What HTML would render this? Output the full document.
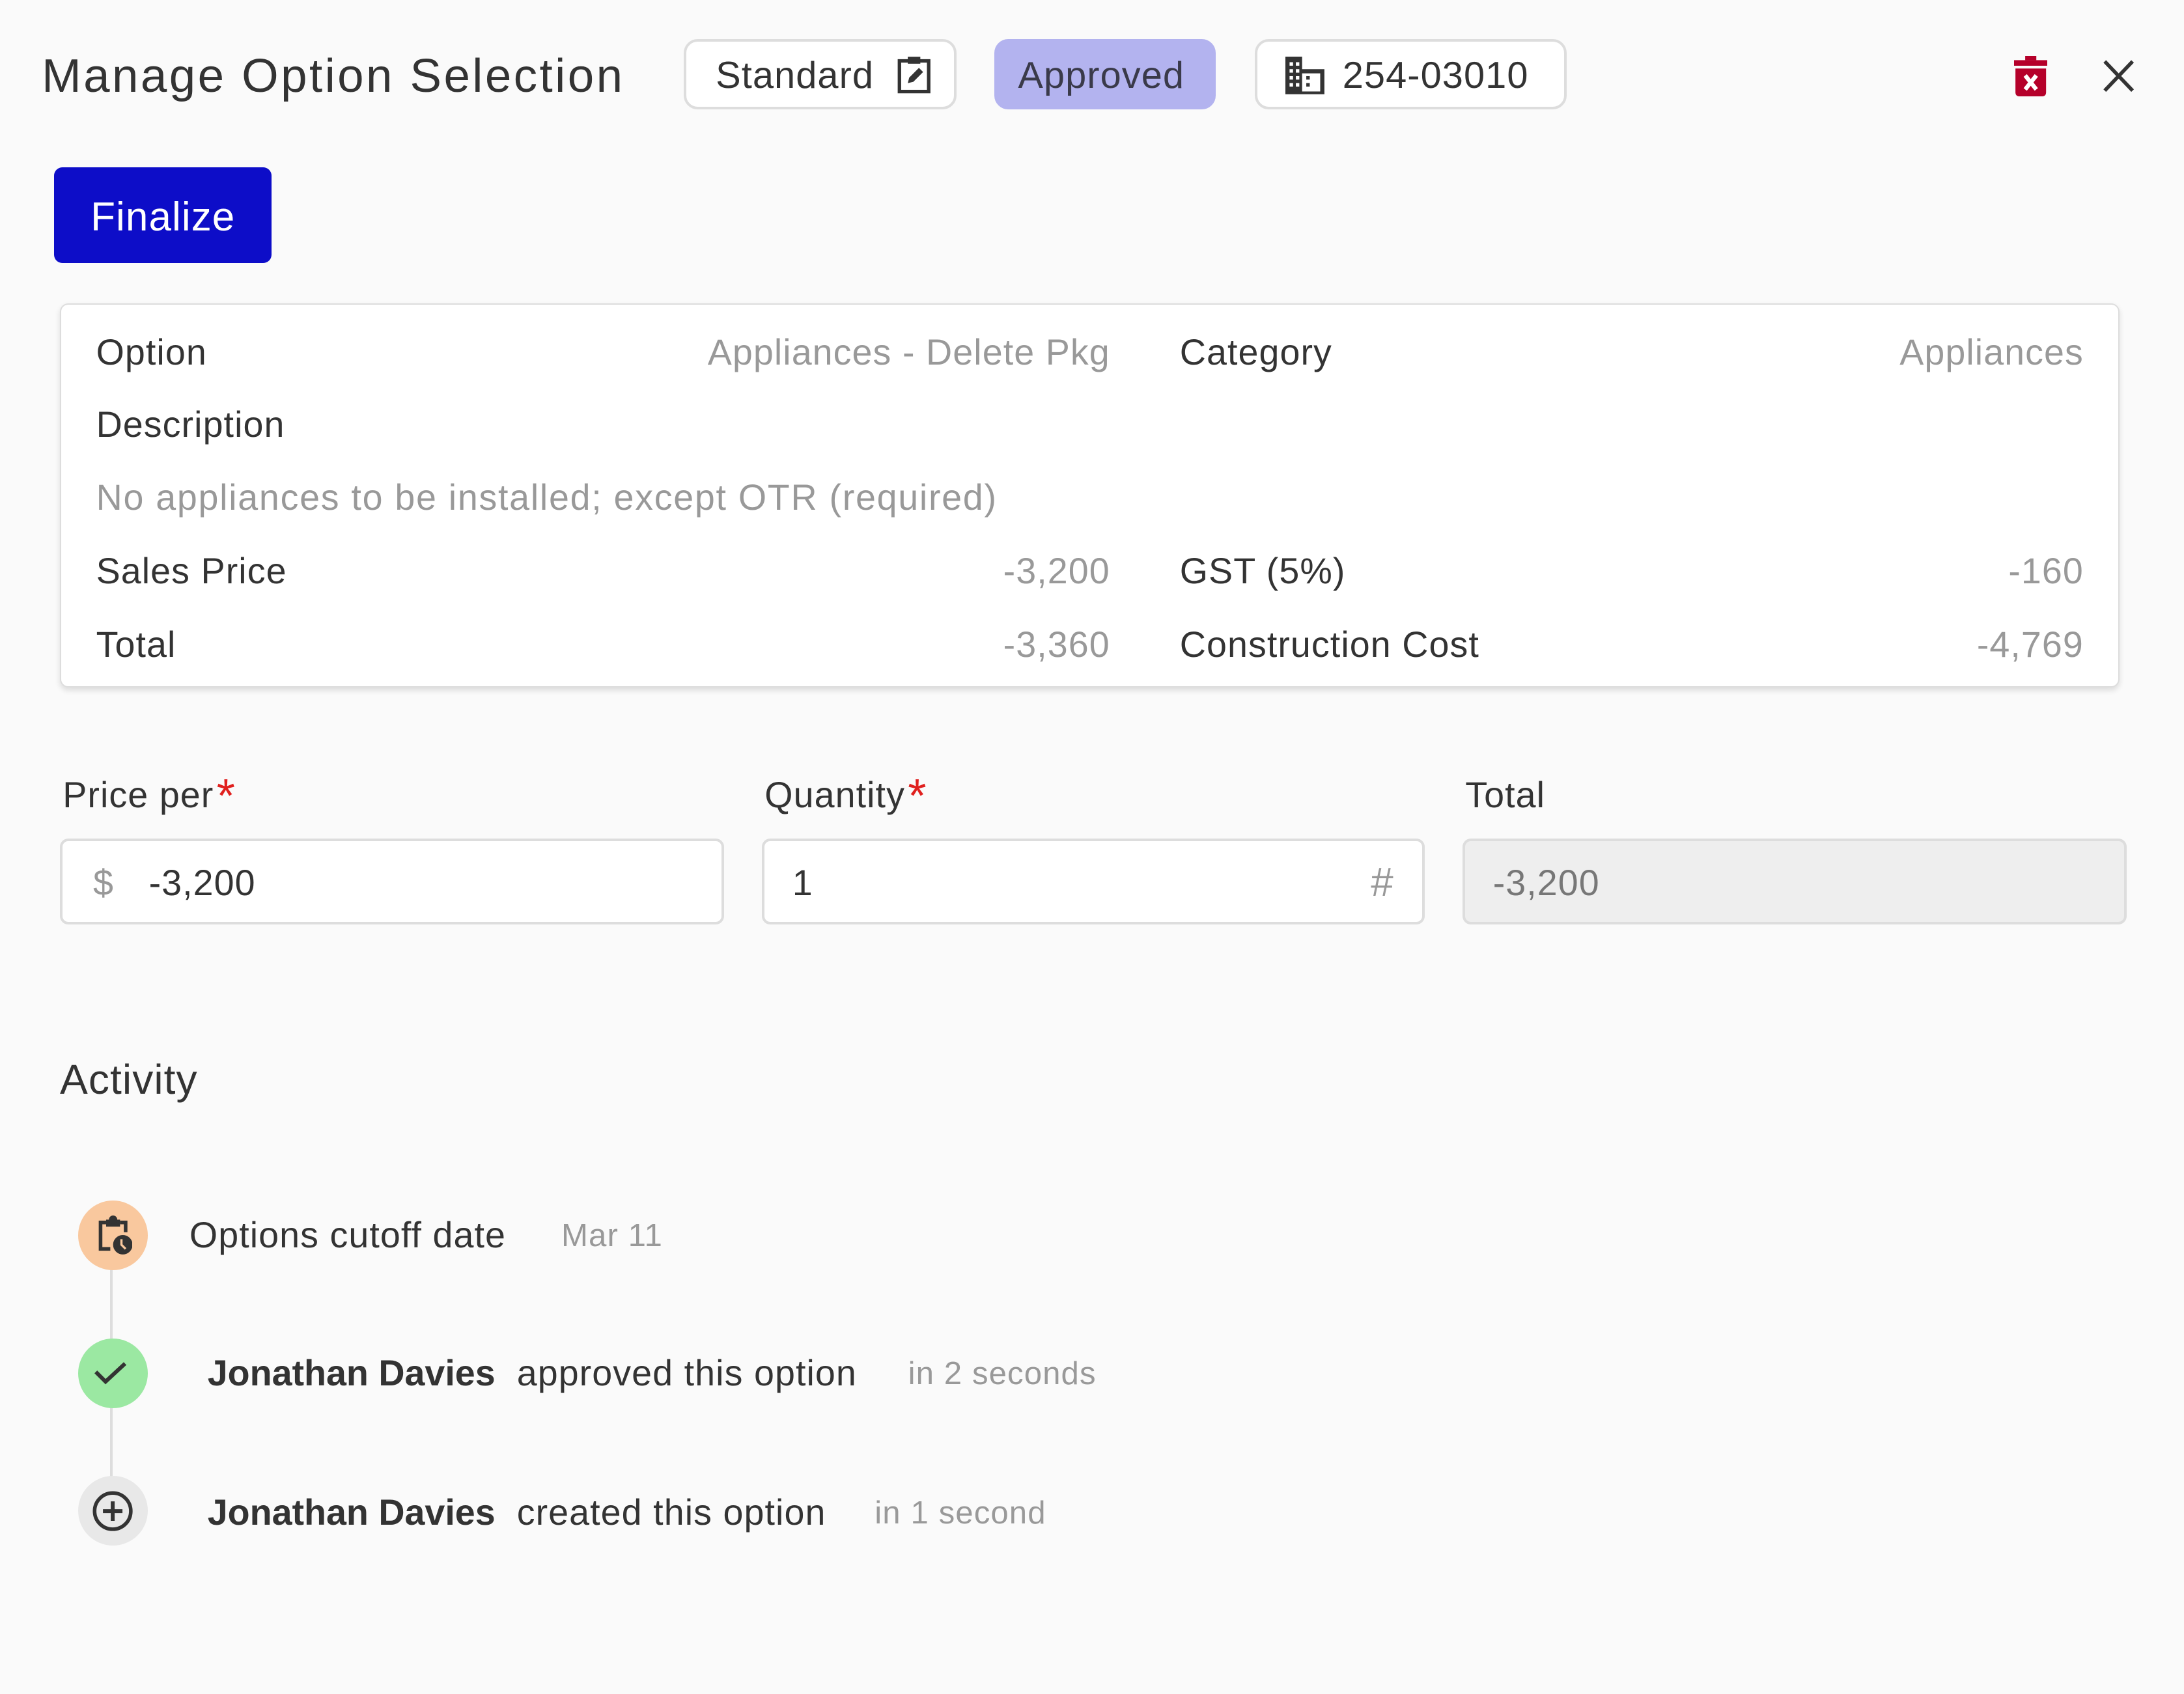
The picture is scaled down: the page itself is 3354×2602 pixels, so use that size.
<!DOCTYPE html>
<html><head><meta charset="utf-8"><style>
html,body{margin:0;padding:0;background:#fafafa;}
body{width:1568px;height:1216.5px;zoom:2.139;overflow:hidden;position:relative;font-family:"Liberation Sans",sans-serif;color:#333;letter-spacing:0.5px;}
.a{position:absolute;white-space:nowrap;}
.chip{position:absolute;top:28px;height:47px;border:2px solid #ddd;border-radius:10px;background:#fff;font-size:27px;line-height:49px;box-sizing:content-box;}
.row{position:absolute;font-size:26px;}
.g{color:#999;}
.inp{position:absolute;top:602px;height:58px;border:2px solid #ddd;border-radius:6px;background:#fff;font-size:26px;line-height:60px;box-sizing:content-box;}
.lbl{position:absolute;top:556px;font-size:26px;}
.star{color:#e0201e;font-size:34px;position:absolute;top:-4px;margin-left:2px;}
.circ{position:absolute;left:56px;width:50px;height:50px;border-radius:50%;}
</style></head><body>
<div class="a" style="left:30px;top:35px;font-size:34px;letter-spacing:1.6px;color:#333">Manage Option Selection</div>
<div class="chip" style="left:491px;width:192px;"><span style="position:absolute;left:21px">Standard</span>
<svg style="position:absolute;left:151px;top:10px" width="26" height="28" viewBox="0 0 26 28"><rect x="2" y="4" width="21" height="22" fill="none" stroke="#333" stroke-width="2.5"/><rect x="8" y="1" width="9" height="5" fill="#333"/><path d="M8 20 L9 16 L16 9 L19 12 L12 19 Z" fill="#333"/></svg></div>
<div class="chip" style="left:714px;width:155px;background:#b3b3ef;border-color:#b3b3ef;"><span style="position:absolute;left:15px;color:#3a3a4a">Approved</span></div>
<div class="chip" style="left:901px;width:220px;"><svg style="position:absolute;left:20px;top:11px" width="28" height="27" viewBox="0 0 28 27"><path d="M0 0H12V9H28V27H0Z" fill="#333"/><g fill="#fff"><rect x="3" y="4" width="2.5" height="2.5"/><rect x="7.5" y="4" width="2.5" height="2.5"/><rect x="3" y="9" width="2.5" height="2.5"/><rect x="7.5" y="9" width="2.5" height="2.5"/><rect x="3" y="14" width="2.5" height="2.5"/><rect x="7.5" y="14" width="2.5" height="2.5"/><rect x="3" y="19" width="2.5" height="2.5"/><rect x="7.5" y="19" width="2.5" height="2.5"/><rect x="12" y="12" width="13" height="13"/></g><g fill="#333"><rect x="15" y="14" width="2.5" height="2.5"/><rect x="15" y="19" width="2.5" height="2.5"/></g></svg><span style="position:absolute;left:61px">254-03010</span></div>
<svg class="a" style="left:1446px;top:40px" width="24" height="29" viewBox="0 0 24 29"><rect x="0" y="3" width="24" height="4" fill="#b5002a"/><rect x="8" y="0" width="8" height="3" fill="#b5002a"/><path d="M1 9H23V26Q23 29 20 29H4Q1 29 1 26Z" fill="#b5002a"/><path d="M8 14L16 24M16 14L8 24" stroke="#fff" stroke-width="3"/></svg>
<svg class="a" style="left:1509px;top:42px" width="24" height="25" viewBox="0 0 24 25"><path d="M2 2L22 23M22 2L2 23" stroke="#333" stroke-width="2.6"/></svg>
<div class="a" style="left:39px;top:120px;width:156px;height:69px;background:#0d0dc8;border-radius:6px;color:#fff;font-size:29px;line-height:72px;text-align:center">Finalize</div>
<div class="a" style="left:43px;top:218px;width:1477px;height:274px;background:#fff;border:1px solid #ddd;border-radius:6px;box-shadow:0 2px 4px rgba(0,0,0,.12)"></div>
<div class="row" style="left:69px;top:238px">Option</div><div class="row g" style="right:771px;top:238px">Appliances - Delete Pkg</div>
<div class="row" style="left:847px;top:238px">Category</div><div class="row g" style="right:72px;top:238px">Appliances</div>
<div class="row" style="left:69px;top:290px">Description</div>
<div class="row g" style="left:69px;top:342px;letter-spacing:0.8px">No appliances to be installed; except OTR (required)</div>
<div class="row" style="left:69px;top:395px">Sales Price</div><div class="row g" style="right:771px;top:395px">-3,200</div>
<div class="row" style="left:847px;top:395px">GST (5%)</div><div class="row g" style="right:72px;top:395px">-160</div>
<div class="row" style="left:69px;top:448px">Total</div><div class="row g" style="right:771px;top:448px">-3,360</div>
<div class="row" style="left:847px;top:448px">Construction Cost</div><div class="row g" style="right:72px;top:448px">-4,769</div>
<div class="lbl" style="left:45px">Price per<span class="star">*</span></div>
<div class="lbl" style="left:549px">Quantity<span class="star">*</span></div>
<div class="lbl" style="left:1052px">Total</div>
<div class="inp" style="left:43px;width:473px"><span style="position:absolute;left:22px;color:#999">$</span><span style="position:absolute;left:62px">-3,200</span></div>
<div class="inp" style="left:547px;width:472px"><span style="position:absolute;left:20px">1</span><span style="position:absolute;right:20px;color:#999;font-size:29px">#</span></div>
<div class="inp" style="left:1050px;width:473px;background:#eee"><span style="position:absolute;left:20px;color:#777">-3,200</span></div>
<div class="a" style="left:43px;top:758px;font-size:30px">Activity</div>
<div class="a" style="left:79px;top:905px;width:2px;height:160px;background:#ddd"></div>
<div class="circ" style="top:862px;background:#f9c89e"><svg style="position:absolute;left:13px;top:11px" width="26" height="29" viewBox="0 0 26 29"><path d="M10 24H3V5H7M17 5H21V12" fill="none" stroke="#333" stroke-width="2.6"/><path d="M7 3H17V8H7Z" fill="#333"/><circle cx="12" cy="3" r="3" fill="#333"/><circle cx="19" cy="21" r="7" fill="#333"/><path d="M18 17V21L21 24" stroke="#f9c89e" stroke-width="1.6" fill="none"/></svg></div>
<div class="circ" style="top:961px;background:#9be8a2"><svg style="position:absolute;left:12px;top:15px" width="26" height="20" viewBox="0 0 26 20"><path d="M1 9L8 16L22 3" fill="none" stroke="#333" stroke-width="2.8"/></svg></div>
<div class="circ" style="top:1060px;background:#e8e8e8"><svg style="position:absolute;left:10px;top:10px" width="30" height="30" viewBox="0 0 30 30"><circle cx="15" cy="15" r="13" fill="none" stroke="#333" stroke-width="2.6"/><path d="M15 8V22M8 15H22" stroke="#333" stroke-width="2.8"/></svg></div>
<div class="a" style="left:136px;top:872px;font-size:26px">Options cutoff date</div>
<div class="a" style="left:403px;top:874px;font-size:23px;color:#999">Mar 11</div>
<div class="a" style="left:149px;top:971px;font-size:26px"><b style="font-weight:600;letter-spacing:0">Jonathan Davies</b>&nbsp; approved this option</div>
<div class="a" style="left:652px;top:973px;font-size:23px;color:#999">in 2 seconds</div>
<div class="a" style="left:149px;top:1071px;font-size:26px"><b style="font-weight:600;letter-spacing:0">Jonathan Davies</b>&nbsp; created this option</div>
<div class="a" style="left:628px;top:1073px;font-size:23px;color:#999">in 1 second</div>
</body></html>
